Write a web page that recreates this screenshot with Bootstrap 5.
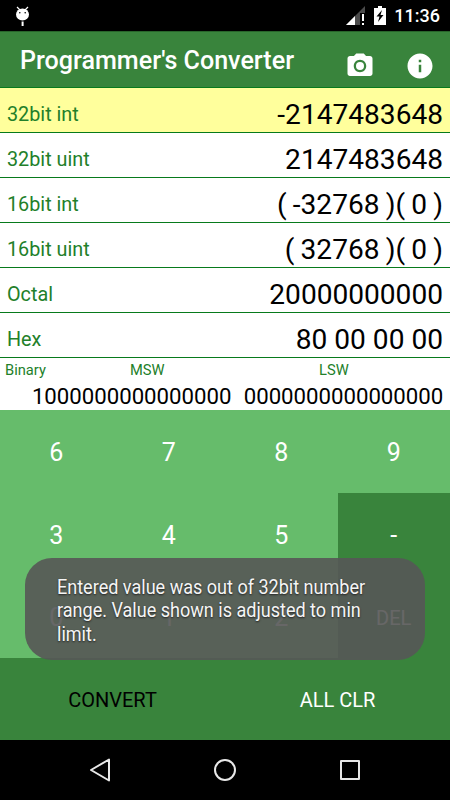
<!DOCTYPE html>
<html lang="en">
<head>
<meta charset="utf-8">
<meta name="viewport" content="width=device-width, initial-scale=1">
<title>Programmer's Converter</title>
<link href="https://cdn.jsdelivr.net/npm/bootstrap@5.3.0/dist/css/bootstrap.min.css" rel="stylesheet">
<style>
body{font-family:Roboto,"Liberation Sans",sans-serif;background:#000;color:#000;width:450px;height:800px;overflow:hidden;line-height:1.2}
.status{height:31px;background:#000;color:#fff;padding-right:10px}
.clock{font-size:18px;font-weight:500;line-height:20px}
.appbar{height:57px;background:#39843c;border-bottom:1px solid #087a1c;border-top:1px solid #28652b;padding:0 15px 0 20px}
.title{font-size:25.1px;font-weight:500;line-height:30px;margin-top:2px}
.bar-icons{gap:30px;padding-top:13px}
.reading{height:45px;background:#fff;border-bottom:1px solid #087a1c;padding:8px 7px 0}
.reading.active{background:#ffff9c}
.name{font-size:19.8px;color:#22802a;padding-top:2px}
.value{font-size:28.1px;white-space:pre;padding-top:2px}
.value.words{word-spacing:-.8px}
.bits{height:52px;background:#fff}
.bits-head{font-size:14.7px;line-height:18px;padding-top:3px;color:#22802a}
.bits-head>span:nth-child(1){width:125px;padding-left:5px}
.bits-head>span:nth-child(2){width:189px;padding-left:5px}
.bits-head>span:nth-child(3){padding-left:5px}
.bits-value{font-size:22.2px;line-height:26px;padding-right:6.8px;gap:12.3px;margin-top:4px}
.pad{height:330px}
.key{border:0;border-radius:0;background:#66bc6b;color:#fff;height:82.5px;font-size:25px;padding:4px 0 0;line-height:1.2}
.key.op{background:#39843c}
.key.word{font-size:20px;padding-top:3px}
.key.go{color:#000}
.notice{left:25px;top:558px;width:400px;height:102px;border-radius:27px;background:rgba(86,86,86,.9);color:#f5f5f5;padding:18px 0 0 32px;font-size:20px;line-height:23.4px;text-shadow:0 1px 2px #222}
.notice span{display:block;transform-origin:0 0;transform:scaleX(.902);white-space:nowrap}
.softnav{height:60px;background:#000}
</style>
</head>
<body>
<div class="status d-flex align-items-center">
  <svg width="16" height="24" viewBox="0 0 16 24" style="margin-left:15px" fill="#fff"><path d="M2 3l3 3M13 3l-3 3" stroke="#fff" stroke-width="1.2"/><ellipse cx="7.5" cy="10.500" rx="6.5" ry="6"/><path d="M6.6 17.500h2v4.500h-2z"/><circle cx="4.8" cy="8.8" r=".8" fill="#000"/><circle cx="10.2" cy="8.8" r=".8" fill="#000"/></svg>
  <svg class="ms-auto" width="20" height="20" viewBox="0 0 20 20" style="margin-right:-2px"><path d="M0 19L19 0v19z" fill="#4b4b4b"/><path d="M0 19l9-9v9z" fill="#fff"/><path d="M14 7h5v12h-5z" fill="#000"/><path d="M16 8h2v7h-2zM16 17h2v2h-2z" fill="#fff"/></svg>
  <svg width="12" height="19" viewBox="0 0 12 19" style="margin:0 8px 0 10px"><path d="M0 2h4V0h4v2h4v17H0z" fill="#fff"/><path d="M8 4L2.500 10.500H5.500L4 16l5.500-7H6.500z" fill="#000"/></svg>
  <span class="clock">11:36</span>
</div>
<header class="appbar d-flex align-items-center text-white">
  <h1 class="title mb-0 me-auto">Programmer's Converter</h1>
  <div class="bar-icons d-flex">
    <svg width="30" height="30" viewBox="0 0 24 24" fill="#fff"><circle cx="12" cy="12" r="3.200"/><path d="M9 2L7.170 4H4c-1.100 0-2 .9-2 2v12c0 1.100.9 2 2 2h16c1.100 0 2-.9 2-2V6c0-1.100-.9-2-2-2h-3.170L15 2H9zm3 15c-2.760 0-5-2.240-5-5s2.240-5 5-5 5 2.240 5 5-2.240 5-5 5z"/></svg>
    <svg width="30" height="30" viewBox="0 0 24 24" fill="#fff"><path d="M12 2C6.480 2 2 6.480 2 12s4.480 10 10 10 10-4.480 10-10S17.520 2 12 2zm1 15h-2v-6h2v6zm0-8h-2V7h2v2z"/></svg>
  </div>
</header>
<main>
  <div class="reading active d-flex align-items-center justify-content-between"><span class="name">32bit int</span><span class="value">-2147483648</span></div>
  <div class="reading d-flex align-items-center justify-content-between"><span class="name">32bit uint</span><span class="value">2147483648</span></div>
  <div class="reading d-flex align-items-center justify-content-between"><span class="name">16bit int</span><span class="value words">( -32768 )( 0 )</span></div>
  <div class="reading d-flex align-items-center justify-content-between"><span class="name">16bit uint</span><span class="value words">( 32768 )( 0 )</span></div>
  <div class="reading d-flex align-items-center justify-content-between"><span class="name">Octal</span><span class="value">20000000000</span></div>
  <div class="reading d-flex align-items-center justify-content-between"><span class="name">Hex</span><span class="value">80 00 00 00</span></div>
  <div class="bits">
    <div class="bits-head d-flex"><span>Binary</span><span>MSW</span><span>LSW</span></div>
    <div class="bits-value d-flex justify-content-end"><span>1000000000000000</span><span>0000000000000000</span></div>
  </div>
  <div class="pad">
    <div class="row g-0">
      <button class="col-3 key">6</button><button class="col-3 key">7</button><button class="col-3 key">8</button><button class="col-3 key">9</button>
      <button class="col-3 key">3</button><button class="col-3 key">4</button><button class="col-3 key">5</button><button class="col-3 key op">-</button>
      <button class="col-3 key">0</button><button class="col-3 key">1</button><button class="col-3 key">2</button><button class="col-3 key op word">DEL</button>
      <button class="col-6 key op word go">CONVERT</button><button class="col-6 key op word">ALL CLR</button>
    </div>
  </div>
</main>
<nav class="softnav d-flex align-items-center">
  <svg width="450" height="60" viewBox="0 0 450 60" fill="none" stroke="#e8e8e8" stroke-width="2" stroke-linejoin="round"><path d="M109 19.500v21L91 30z"/><circle cx="225" cy="30" r="10"/><path d="M341 21h18v18h-18z"/></svg>
</nav>
<div class="notice position-absolute" role="status"><span>Entered value was out of 32bit number</span><span>range. Value shown is adjusted to min</span><span>limit.</span></div>
<script src="https://cdn.jsdelivr.net/npm/bootstrap@5.3.0/dist/js/bootstrap.bundle.min.js"></script>
</body>
</html>
